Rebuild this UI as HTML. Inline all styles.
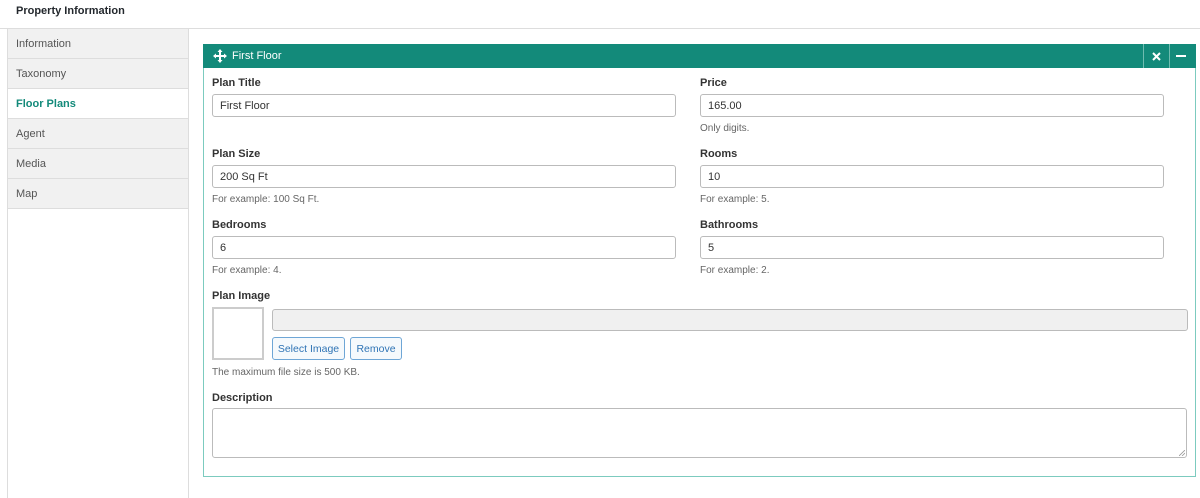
<!DOCTYPE html>
<html><head><meta charset="utf-8"><style>
*{box-sizing:border-box;margin:0;padding:0}
body{width:1200px;height:489px;background:#fff;font-family:"Segoe UI","Liberation Sans",sans-serif;font-size:11px;color:#32373c;position:relative;overflow:hidden}
.a{position:absolute}
.title{left:16px;top:5px;font-weight:bold;font-size:11px;color:#23282d}
.topline{left:0;top:28px;width:1200px;height:1px;background:#ddd}
.side{left:7px;top:28px;width:182px;height:470px;border-left:1px solid #ddd;border-right:1px solid #ddd}
.tab{position:absolute;left:0;width:180px;height:30px;background:#f1f1f1;border-bottom:1px solid #ddd;padding:9px 0 0 8px;color:#555;font-size:11px}
.tab.on{background:#fff;color:#138a7a;font-weight:bold}
.panel{left:203px;top:44px;width:993px;height:433px;border:1px solid #7ccbbf}
.hd{left:203px;top:44px;width:993px;height:24px;background:#138a7a;color:#fff;font-size:11px}
.lbl{font-weight:bold;color:#333;font-size:11px}
.inp{height:23px;border:1px solid #bbb;border-radius:3px;padding:5px 7px;font-size:11px;color:#333;background:#fff}
.help{color:#666;font-size:10px}
.btn{height:23px;border:1px solid #6ea6d6;border-radius:3px;background:#f5f9fc;color:#2f74b5;font-size:10.5px;padding:5px 0;text-align:center;white-space:nowrap}
</style></head><body>
<div class="a title">Property Information</div>
<div class="a topline"></div>
<div class="a side">
<div class="tab" style="top:1px">Information</div>
<div class="tab" style="top:31px">Taxonomy</div>
<div class="tab on" style="top:61px">Floor Plans</div>
<div class="tab" style="top:91px">Agent</div>
<div class="tab" style="top:121px">Media</div>
<div class="tab" style="top:151px">Map</div>
</div>
<div class="a panel"></div>
<div class="a hd">
<svg class="a" style="left:10px;top:5px" width="14" height="14" viewBox="0 0 14 14" fill="#fff"><path d="M7 0L9.5 3H8v3h3V4.5L14 7l-3 2.5V8H8v3h1.5L7 14l-2.5-3H6V8H3v1.5L0 7l3-2.5V6h3V3H4.5z"/></svg>
<span class="a" style="left:29px;top:6px">First Floor</span>
<div class="a" style="left:940px;top:0;width:1px;height:24px;background:#6fbcb0"></div>
<div class="a" style="left:966px;top:0;width:1px;height:24px;background:#6fbcb0"></div>
<svg class="a" style="left:949px;top:8px" width="9" height="9" viewBox="0 0 9 9" stroke="#fff" stroke-width="2"><path d="M1 1L8 8M8 1L1 8"/></svg>
<div class="a" style="left:973px;top:11px;width:10px;height:2px;background:#fff"></div>
</div>

<div class="a lbl" style="left:212px;top:77px">Plan Title</div>
<div class="a inp" style="left:212px;top:94px;width:464px">First Floor</div>
<div class="a lbl" style="left:700px;top:77px">Price</div>
<div class="a inp" style="left:700px;top:94px;width:464px">165.00</div>
<div class="a help" style="left:700px;top:123px">Only digits.</div>

<div class="a lbl" style="left:212px;top:148px">Plan Size</div>
<div class="a inp" style="left:212px;top:165px;width:464px">200 Sq Ft</div>
<div class="a help" style="left:212px;top:194px">For example: 100 Sq Ft.</div>
<div class="a lbl" style="left:700px;top:148px">Rooms</div>
<div class="a inp" style="left:700px;top:165px;width:464px">10</div>
<div class="a help" style="left:700px;top:194px">For example: 5.</div>

<div class="a lbl" style="left:212px;top:219px">Bedrooms</div>
<div class="a inp" style="left:212px;top:236px;width:464px">6</div>
<div class="a help" style="left:212px;top:265px">For example: 4.</div>
<div class="a lbl" style="left:700px;top:219px">Bathrooms</div>
<div class="a inp" style="left:700px;top:236px;width:464px">5</div>
<div class="a help" style="left:700px;top:265px">For example: 2.</div>

<div class="a lbl" style="left:212px;top:290px">Plan Image</div>
<div class="a" style="left:212px;top:307px;width:52px;height:53px;border:2px solid #ccc"></div>
<div class="a inp" style="left:272px;top:309px;width:916px;height:22px;background:#f0f0f0"></div>
<div class="a btn" style="left:272px;top:337px;width:73px">Select Image</div>
<div class="a btn" style="left:350px;top:337px;width:52px">Remove</div>
<div class="a help" style="left:212px;top:367px">The maximum file size is 500 KB.</div>

<div class="a lbl" style="left:212px;top:392px">Description</div>
<div class="a inp" style="left:212px;top:408px;width:975px;height:50px"></div>
<svg class="a" style="left:1179px;top:450px" width="6" height="6" viewBox="0 0 6 6" stroke="#999" stroke-width="0.8"><path d="M0 6L6 0M3 6L6 3"/></svg>
</body></html>
